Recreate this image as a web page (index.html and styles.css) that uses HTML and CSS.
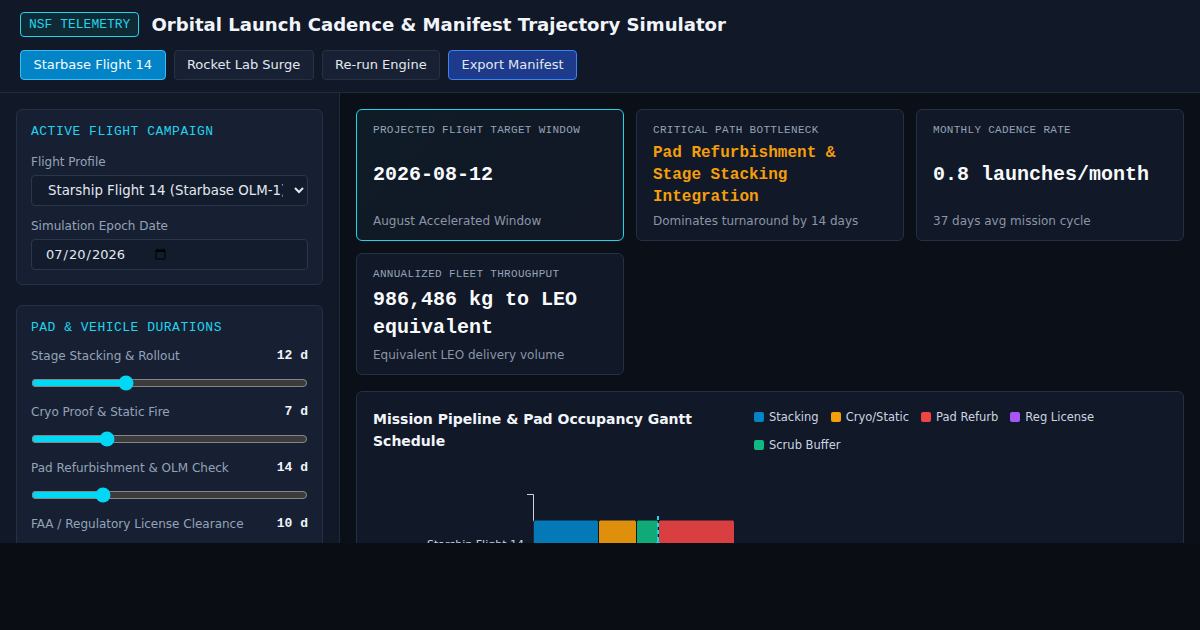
FILE: index.html
```html
<!DOCTYPE html>
<html lang="en">
<head>
<meta charset="utf-8">
<title>Orbital Launch Cadence &amp; Manifest Trajectory Simulator</title>
<link rel="stylesheet" href="styles.css">
</head>
<body>
<div class="app">
  <header class="topbar">
    <div class="title-row">
      <span class="badge">NSF TELEMETRY</span>
      <h1 class="title">Orbital Launch Cadence &amp; Manifest Trajectory Simulator</h1>
    </div>
    <div class="actions">
      <button class="btn btn-primary">Starbase Flight 14</button>
      <button class="btn">Rocket Lab Surge</button>
      <button class="btn">Re-run Engine</button>
      <button class="btn btn-export">Export Manifest</button>
    </div>
  </header>
  <div class="layout">
    <aside class="sidebar">
      <section class="panel">
        <h2 class="panel-title">Active Flight Campaign</h2>
        <label class="field-label">Flight Profile</label>
        <select class="select">
          <option>Starship Flight 14 (Starbase OLM-1)</option>
        </select>
        <label class="field-label">Simulation Epoch Date</label>
        <div class="date-box"><input class="date-input" type="date" value="2026-07-20"></div>
      </section>
      <section class="panel">
        <h2 class="panel-title tight">Pad &amp; Vehicle Durations</h2>
        <div class="dur-row">
          <div class="dur-head"><span class="dur-label">Stage Stacking &amp; Rollout</span><span class="dur-value">12 d</span></div>
          <input class="range" type="range" min="0" max="36" value="12">
        </div>
        <div class="dur-row">
          <div class="dur-head"><span class="dur-label">Cryo Proof &amp; Static Fire</span><span class="dur-value">7 d</span></div>
          <input class="range" type="range" min="0" max="27" value="7">
        </div>
        <div class="dur-row">
          <div class="dur-head"><span class="dur-label">Pad Refurbishment &amp; OLM Check</span><span class="dur-value">14 d</span></div>
          <input class="range" type="range" min="0" max="57" value="14">
        </div>
        <div class="dur-row">
          <div class="dur-head"><span class="dur-label">FAA / Regulatory License Clearance</span><span class="dur-value">10 d</span></div>
          <input class="range" type="range" min="0" max="45" value="10">
        </div>
      </section>
    </aside>
    <main class="main">
      <div class="cards">
        <div class="card card-highlight">
          <div class="card-label">Projected Flight Target Window</div>
          <div class="card-value">2026-08-12</div>
          <div class="card-sub">August Accelerated Window</div>
        </div>
        <div class="card">
          <div class="card-label">Critical Path Bottleneck</div>
          <div class="card-value card-warn">Pad Refurbishment &amp; Stage Stacking Integration</div>
          <div class="card-sub">Dominates turnaround by 14 days</div>
        </div>
        <div class="card">
          <div class="card-label">Monthly Cadence Rate</div>
          <div class="card-value">0.8 launches/month</div>
          <div class="card-sub">37 days avg mission cycle</div>
        </div>
        <div class="card">
          <div class="card-label">Annualized Fleet Throughput</div>
          <div class="card-value">986,486 kg to LEO equivalent</div>
          <div class="card-sub">Equivalent LEO delivery volume</div>
        </div>
      </div>
      <section class="gantt">
        <div class="gantt-head">
          <h3 class="gantt-title">Mission Pipeline &amp; Pad Occupancy Gantt Schedule</h3>
          <div class="legend">
            <span class="legend-item"><i class="sw sw-stack"></i>Stacking</span>
            <span class="legend-item"><i class="sw sw-cryo"></i>Cryo/Static</span>
            <span class="legend-item"><i class="sw sw-refurb"></i>Pad Refurb</span>
            <span class="legend-item"><i class="sw sw-reg"></i>Reg License</span>
            <span class="legend-item"><i class="sw sw-scrub"></i>Scrub Buffer</span>
          </div>
        </div>
        <svg class="chart" width="810" height="160" viewBox="0 0 810 160">
          <path class="axis" d="M154,26.5H160.5V150H154"/>
          <text class="row-label" x="151" y="80" text-anchor="end">Starship Flight 14</text>
          <rect class="bar bar-stack" x="160.5" y="52" width="65" height="48" rx="2"/>
          <rect class="bar bar-cryo" x="225.5" y="52" width="38" height="48" rx="2"/>
          <rect class="bar bar-scrub" x="263.5" y="52" width="22" height="48" rx="2"/>
          <rect class="bar bar-refurb" x="285.5" y="52" width="76" height="48" rx="2"/>
          <line class="now-line" x1="285" y1="48" x2="285" y2="150"/>
          <path class="now-mark" d="M281,78 L285,72 L289,78 Z"/>
        </svg>
      </section>
    </main>
  </div>
</div>
</body>
</html>
```
FILE: styles.css
```css
* { box-sizing: border-box; }

body {
  margin: 0;
  background: #0a0d14;
  font-family: "DejaVu Sans", "Noto Sans", sans-serif;
  color: #e2e8f0;
}

.app {
  height: 543px;
  overflow: hidden;
  display: flex;
  flex-direction: column;
  background: #0b0f17;
}

/* Header */
.topbar {
  flex-shrink: 0;
  background: #111827;
  border-bottom: 1px solid #1f2a3d;
  padding: 12px 20px;
  display: flex;
  flex-direction: column;
  gap: 13px;
}

.title-row {
  display: flex;
  align-items: center;
  gap: 12px;
}

.badge {
  font-family: "Liberation Mono", monospace;
  font-size: 13px;
  line-height: 15px;
  color: #22d3ee;
  background: #0f2a35;
  border: 1px solid #22d3ee;
  border-radius: 4px;
  padding: 4px 8px;
}

.title {
  margin: 0;
  font-size: 18.1px;
  line-height: 25px;
  font-weight: 700;
  color: #f1f5f9;
}

.actions {
  display: flex;
  gap: 8px;
}

.btn {
  font-family: "DejaVu Sans", sans-serif;
  font-size: 13px;
  line-height: 16px;
  padding: 6px 12.4px;
  border-radius: 4px;
  border: 1px solid #263144;
  background: #182133;
  color: #e2e8f0;
}

.btn-primary {
  background: #0284c7;
  border-color: #38bdf8;
  color: #f8fafc;
}

.btn-export {
  background: #1e3a8a;
  border-color: #3b82f6;
  color: #e2e8f0;
}

/* Layout */
.layout {
  flex: 1;
  min-height: 0;
  display: flex;
}

.sidebar {
  flex-shrink: 0;
  width: 340px;
  padding: 16px;
  background: #111827;
  border-right: 1px solid #1f2a3d;
  display: flex;
  flex-direction: column;
  gap: 20px;
}

.panel {
  background: #172033;
  border: 1px solid #243044;
  border-radius: 6px;
  padding: 14px;
}

.panel-title {
  margin: 0 0 14px;
  font-family: "Liberation Mono", monospace;
  font-weight: 400;
  font-size: 13px;
  line-height: 16px;
  letter-spacing: 0.5px;
  text-transform: uppercase;
  color: #22d3ee;
}

.panel-title.tight { margin-bottom: 12px; }

.field-label {
  display: block;
  font-size: 12px;
  line-height: 16px;
  color: #94a3b8;
  margin-bottom: 5px;
}

.select {
  display: block;
  width: 100%;
  height: 31px;
  margin: 0 0 12px;
  padding: 0 8px 0 12px;
  font-family: "DejaVu Sans", sans-serif;
  font-size: 13.333px;
  color: #e2e8f0;
  background: #131c2c;
  border: 1px solid #2a3649;
  border-radius: 4px;
}

.date-box {
  height: 31px;
  display: flex;
  align-items: center;
  padding: 0 13px;
  background: #131c2c;
  border: 1px solid #2a3649;
  border-radius: 4px;
}

.date-input {
  font-family: "DejaVu Sans", sans-serif;
  font-size: 13px;
  color: #e2e8f0;
  background: transparent;
  border: none;
  padding: 0;
  outline: none;
}

.dur-row { margin-bottom: 13px; }

.dur-head {
  display: flex;
  justify-content: space-between;
  align-items: center;
  line-height: 16px;
}

.dur-label {
  font-size: 12px;
  color: #94a3b8;
}

.dur-value {
  font-family: "Liberation Mono", monospace;
  font-weight: 700;
  font-size: 13px;
  color: #f1f5f9;
}

.range {
  display: block;
  width: 100%;
  margin: 11px 0 0;
  accent-color: #00d8f5;
}

/* Main */
.main {
  flex: 1;
  min-width: 0;
  padding: 16px;
}

.cards {
  display: grid;
  grid-template-columns: repeat(3, 1fr);
  gap: 12px;
  margin-bottom: 16px;
}

.card {
  display: flex;
  flex-direction: column;
  justify-content: space-between;
  gap: 5px;
  background: #111827;
  border: 1px solid #233045;
  border-radius: 6px;
  padding: 13px 16px 11px;
}

.card-highlight {
  border-color: #22d3ee;
  background: linear-gradient(135deg, #0e1c26 0%, #111826 60%, #121826 100%);
}

.card-label {
  font-family: "Liberation Mono", monospace;
  font-size: 11px;
  line-height: 14px;
  letter-spacing: 0.3px;
  text-transform: uppercase;
  color: #94a3b8;
}

.card-value {
  font-family: "Liberation Mono", monospace;
  font-weight: 700;
  font-size: 20px;
  line-height: 28px;
  color: #f8fafc;
}

.card-value.card-warn {
  font-size: 16px;
  line-height: 22px;
  color: #f59e0b;
}

.card-sub {
  font-size: 12px;
  line-height: 16px;
  color: #8b95a7;
}

/* Gantt */
.gantt {
  background: #111827;
  border: 1px solid #233045;
  border-radius: 6px;
  padding: 16px;
}

.gantt-head {
  display: flex;
  gap: 16px;
}

.gantt-title {
  flex: 1;
  margin: 0;
  font-size: 14px;
  line-height: 22px;
  font-weight: 700;
  color: #f1f5f9;
}

.legend {
  width: 413px;
  flex-shrink: 0;
  display: flex;
  flex-wrap: wrap;
  column-gap: 12px;
  row-gap: 12px;
  padding-top: 1px;
}

.legend-item {
  display: flex;
  align-items: center;
  gap: 5px;
  font-size: 11.5px;
  line-height: 16px;
  color: #cbd5e1;
}

.sw {
  display: inline-block;
  width: 10px;
  height: 10px;
  border-radius: 2px;
}

.sw-stack { background: #0284c7; }
.sw-cryo { background: #f59e0b; }
.sw-refurb { background: #ef4444; }
.sw-reg { background: #a855f7; }
.sw-scrub { background: #10b981; }

.chart {
  display: block;
  margin-top: 15px;
}

.axis {
  fill: none;
  stroke: #cbd5e1;
  stroke-width: 1;
}

.row-label {
  font-family: "DejaVu Sans", sans-serif;
  font-size: 11px;
  fill: #cbd5e1;
}

.bar {
  stroke: #0f172a;
  stroke-width: 1;
  opacity: 0.9;
}

.bar-stack { fill: #0284c7; }
.bar-cryo { fill: #f59e0b; }
.bar-scrub { fill: #10b981; }
.bar-refurb { fill: #ef4444; }

.now-line {
  stroke: #22d3ee;
  stroke-width: 2;
  stroke-dasharray: 4 3;
}

.now-mark { fill: #22d3ee; }
```
